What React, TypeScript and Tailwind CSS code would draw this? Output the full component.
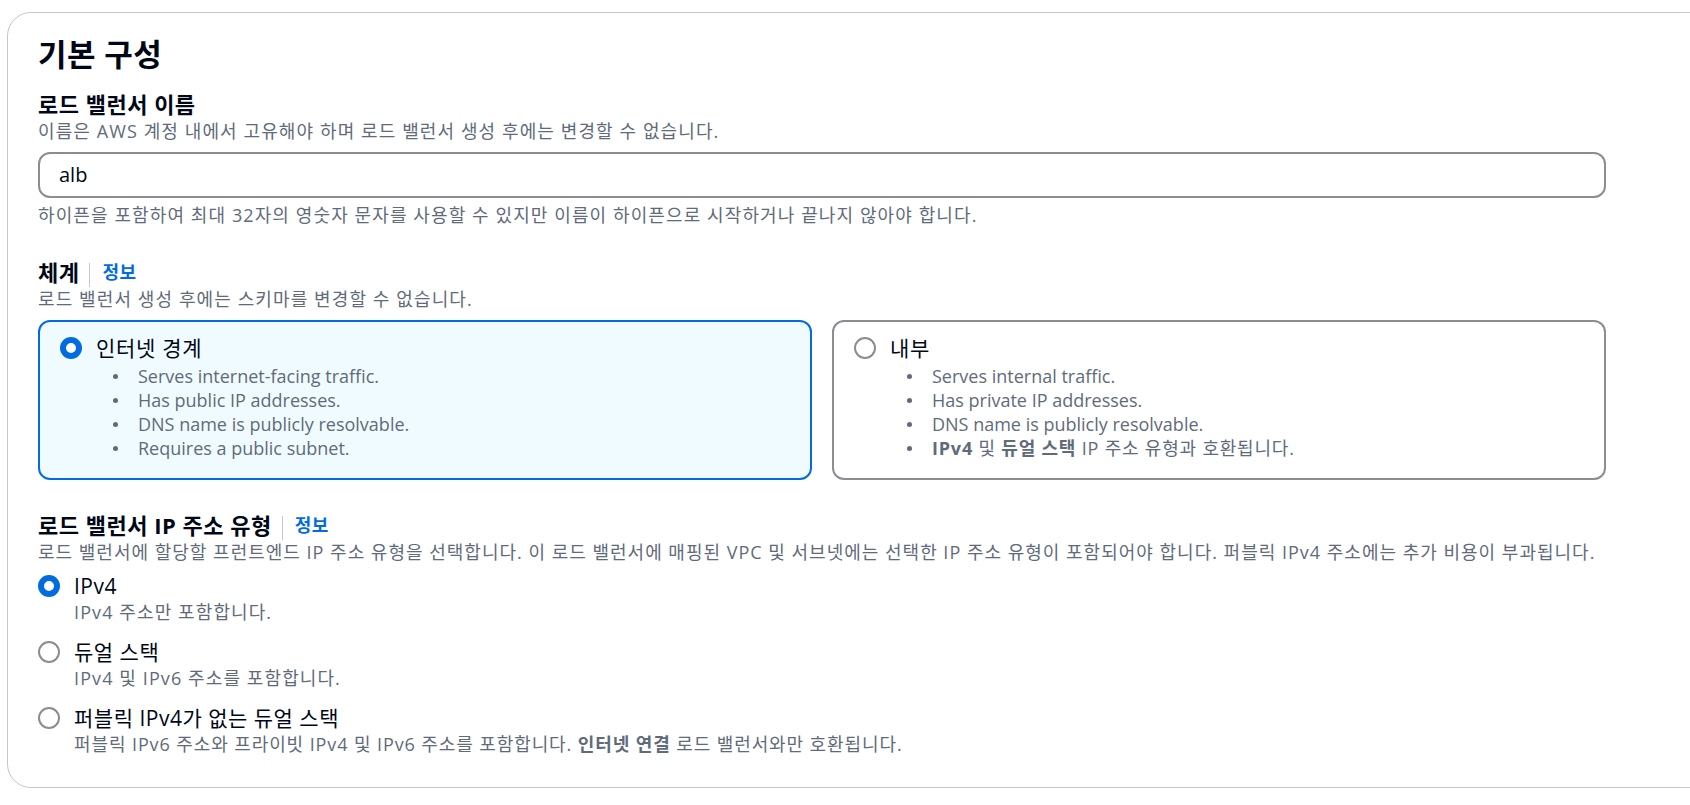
const font = "font-['Open_Sans','Noto_Sans_CJK_JP',sans-serif]";

function Radio({ checked }: { checked: boolean }) {
  return checked ? (
    <span className="block size-[22px] shrink-0 rounded-full border-[6px] border-[#006ce0] bg-white" />
  ) : (
    <span className="block size-[22px] shrink-0 rounded-full border-2 border-[#8c8c94] bg-white" />
  );
}

function Label({ text, info }: { text: string; info?: boolean }) {
  return (
    <div className="flex items-start">
      <span className="text-[22px] font-bold leading-[30px] tracking-[0.5px] text-[#000716]">{text}</span>
      {info && (
        <>
          <span className="ml-[10px] mr-[12px] mt-[6px] h-[24px] w-px bg-[#c6c6cd]" />
          <span className="text-[18px] font-bold leading-[30px] tracking-[0.5px] text-[#006ce0]">정보</span>
        </>
      )}
    </div>
  );
}

// Korean runs are a little wider in the original font, so descriptions get extra tracking
function Desc({
  children,
  nowrap,
  track = "tracking-[1.1px]",
}: {
  children: React.ReactNode;
  nowrap?: boolean;
  track?: string;
}) {
  return (
    <p className={`text-[18px] leading-[24px] text-[#5f6b7a] ${track} ${nowrap ? "whitespace-nowrap" : ""}`}>
      {children}
    </p>
  );
}

function Bullet({ children, ko }: { children: React.ReactNode; ko?: boolean }) {
  return (
    <li className="flex h-[24px] items-center text-[18px] leading-[24px] text-[#5f6b7a]">
      <span className="ml-[17px] mr-[20px] size-[5px] shrink-0 rounded-full bg-[#5f6b7a]" />
      <span className={`whitespace-nowrap ${ko ? "tracking-[0.8px]" : ""}`}>{children}</span>
    </li>
  );
}

function Tile({
  checked,
  title,
  items,
}: {
  checked: boolean;
  title: string;
  items: { text: React.ReactNode; ko?: boolean }[];
}) {
  return (
    <div
      className={`h-[160px] rounded-[12px] border-2 pl-[20px] pt-[11px] ${
        checked ? "border-[#006ce0] bg-[#f0fbff]" : "border-[#8c8c94] bg-white"
      }`}
    >
      <div className="flex h-[30px] items-center gap-[14px]">
        <Radio checked={checked} />
        <span className="text-[21px] leading-[30px] tracking-[0.7px] text-[#000716]">{title}</span>
      </div>
      <ul className="ml-[36px] mt-[1px]">
        {items.map((it, i) => (
          <Bullet key={i} ko={it.ko}>
            {it.text}
          </Bullet>
        ))}
      </ul>
    </div>
  );
}

function Option({
  checked,
  title,
  desc,
  track,
}: {
  checked: boolean;
  title: string;
  desc: React.ReactNode;
  track?: string;
}) {
  return (
    <div>
      <div className="flex h-[28px] items-center gap-[14px]">
        <Radio checked={checked} />
        <span className="text-[21px] leading-[28px] tracking-[0.5px] text-[#000716]">{title}</span>
      </div>
      <div className="pl-[36px]">
        <Desc track={track}>{desc}</Desc>
      </div>
    </div>
  );
}

export default function App() {
  return (
    <div className={`h-[805px] w-full overflow-hidden bg-white pl-[7px] pt-[12px] ${font}`}>
      <div className="w-[1760px] rounded-[24px] border border-[#c6c6cd] pb-[31px] pl-[30px] pt-[23px]">
        <div className="w-[1568px]">
          <h2 className="text-[31px] font-bold leading-[36px] tracking-[0.4px] text-[#000716]">기본 구성</h2>

          <div className="mt-[17px]">
            <Label text="로드 밸런서 이름" />
            <Desc>이름은 AWS 계정 내에서 고유해야 하며 로드 밸런서 생성 후에는 변경할 수 없습니다.</Desc>
            <div className="mt-[9px] flex h-[46px] items-center rounded-[12px] border-2 border-[#8c8c94] bg-white pl-[19px]">
              <span className="text-[20px] leading-[28px] text-[#000716]">alb</span>
            </div>
            <div className="mt-[5px]">
              <Desc>
                하이픈을 포함하여 최대 32자의 영숫자 문자를 사용할 수 있지만 이름이 하이픈으로 시작하거나 끝나지 않아야 합니다.
              </Desc>
            </div>
          </div>

          <div className="mt-[30px]">
            <Label text="체계" info />
            <Desc>로드 밸런서 생성 후에는 스키마를 변경할 수 없습니다.</Desc>
            <div className="mt-[9px] grid grid-cols-2 gap-[20px]">
              <Tile
                checked
                title="인터넷 경계"
                items={[
                  { text: "Serves internet-facing traffic." },
                  { text: "Has public IP addresses." },
                  { text: "DNS name is publicly resolvable." },
                  { text: "Requires a public subnet." },
                ]}
              />
              <Tile
                checked={false}
                title="내부"
                items={[
                  { text: "Serves internal traffic." },
                  { text: "Has private IP addresses." },
                  { text: "DNS name is publicly resolvable." },
                  {
                    ko: true,
                    text: (
                      <>
                        <b className="font-bold">IPv4</b> 및 <b className="font-bold">듀얼 스택</b> IP 주소 유형과 호환됩니다.
                      </>
                    ),
                  },
                ]}
              />
            </div>
          </div>

          <div className="mt-[30px]">
            <Label text="로드 밸런서 IP 주소 유형" info />
            <Desc nowrap track="tracking-[1px]">
              로드 밸런서에 할당할 프런트엔드 IP 주소 유형을 선택합니다. 이 로드 밸런서에 매핑된 VPC 및 서브넷에는 선택한 IP 주소 유형이 포함되어야 합니다. 퍼블릭 IPv4 주소에는 추가 비용이 부과됩니다.
            </Desc>
            <div className="mt-[8px] flex flex-col gap-[14px]">
              <Option checked title="IPv4" desc="IPv4 주소만 포함합니다." />
              <Option checked={false} title="듀얼 스택" desc="IPv4 및 IPv6 주소를 포함합니다." />
              <Option
                checked={false}
                track="tracking-[0.9px]"
                title="퍼블릭 IPv4가 없는 듀얼 스택"
                desc={
                  <>
                    퍼블릭 IPv6 주소와 프라이빗 IPv4 및 IPv6 주소를 포함합니다. <b className="font-bold">인터넷 연결</b> 로드 밸런서와만 호환됩니다.
                  </>
                }
              />
            </div>
          </div>
        </div>
      </div>
    </div>
  );
}
